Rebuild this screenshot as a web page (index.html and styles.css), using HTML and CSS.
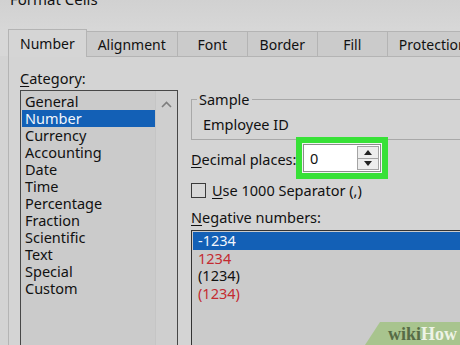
FILE: index.html
```html
<!DOCTYPE html>
<html lang="en">
<head>
    <meta charset="UTF-8" />
    <meta name="viewport" content="width=device-width, initial-scale=1.0">
    <title>Format Cells</title>
    <link rel="stylesheet" href="styles.css">
</head>
<body>
    <div class="dialog">
        <div class="titlebar">
            <span class="title">Format Cells</span>
        </div>

        <div class="tabs">
            <div class="tab tab-active">Number</div>
            <div class="tab">Alignment</div>
            <div class="tab">Font</div>
            <div class="tab">Border</div>
            <div class="tab">Fill</div>
            <div class="tab">Protection</div>
        </div>

        <div class="panel">
            <!-- Columna izquierda: categorias -->
            <div class="col-left">
                <div class="label"><u>C</u>ategory:</div>
                <div class="listbox cat-list">
                    <ul class="cat-items">
                        <li class="item">General</li>
                        <li class="item item-selected">Number</li>
                        <li class="item">Currency</li>
                        <li class="item">Accounting</li>
                        <li class="item">Date</li>
                        <li class="item">Time</li>
                        <li class="item">Percentage</li>
                        <li class="item">Fraction</li>
                        <li class="item">Scientific</li>
                        <li class="item">Text</li>
                        <li class="item">Special</li>
                        <li class="item">Custom</li>
                    </ul>
                    <div class="scrollbar">
                        <svg class="scroll-arrow" width="11" height="7" viewBox="0 0 11 7">
                            <path d="M1 6 L5.5 1.5 L10 6" fill="none" stroke="#7e7e7e" stroke-width="1.6"/>
                        </svg>
                    </div>
                </div>
            </div>

            <!-- Columna derecha: opciones -->
            <div class="col-right">
                <fieldset class="sample">
                    <legend>Sample</legend>
                    <div class="sample-text">Employee ID</div>
                </fieldset>

                <div class="decimals">
                    <div class="decimals-label"><u>D</u>ecimal places:</div>
                    <div class="spin">
                        <div class="spin-value">0</div>
                        <div class="spin-buttons">
                            <div class="spin-btn spin-up">
                                <svg width="8" height="5" viewBox="0 0 8 5"><path d="M0 5 L4 0 L8 5 Z" fill="#222"/></svg>
                            </div>
                            <div class="spin-btn">
                                <svg width="8" height="5" viewBox="0 0 8 5"><path d="M0 0 L8 0 L4 5 Z" fill="#222"/></svg>
                            </div>
                        </div>
                    </div>
                </div>

                <div class="check">
                    <span class="check-box"></span>
                    <span><u>U</u>se 1000 Separator (,)</span>
                </div>

                <div class="label neg-label"><u>N</u>egative numbers:</div>
                <div class="listbox neg-list">
                    <div class="neg-item item-selected">-1234</div>
                    <div class="neg-item neg-red">1234</div>
                    <div class="neg-item">(1234)</div>
                    <div class="neg-item neg-red">(1234)</div>
                </div>
            </div>
        </div>
    </div>

    <div class="watermark"><span class="wm-wiki">wiki</span><span class="wm-how">How</span></div>
</body>
</html>
```

FILE: styles.css
```css
body {
    margin: 0;
    width: 460px;
    height: 345px;
    overflow: hidden;
    position: relative;
    background-color: #d3d3d3;
    font-family: "Noto Sans", "Open Sans", sans-serif;
    font-size: 14.5px;
    line-height: 17px;
    color: #111;
}

u {
    text-underline-offset: 2px;
    text-decoration-thickness: 1px;
}

.dialog {
    width: 540px;
}

.titlebar {
    height: 29px;
    padding-left: 10px;
    overflow: hidden;
    background: linear-gradient(#d1d1d1, #d7d7d7);
}

.title {
    display: block;
    margin-top: -9px;
    font-size: 15px;
}

.tabs {
    display: flex;
    align-items: flex-end;
    padding-left: 9px;
    background-color: #d7d7d7;
}

.tab {
    box-sizing: border-box;
    height: 25px;
    min-width: 71px;
    padding: 0 11px;
    margin-left: -1px;
    display: flex;
    align-items: center;
    justify-content: center;
    border: 1px solid #b4b4b4;
    border-bottom: none;
    background-color: #cbcbcb;
    font-size: 14px;
    white-space: nowrap;
}

.tab-active {
    position: relative;
    height: 28px;
    margin-bottom: -1px;
    background-color: #d5d5d5;
}

.panel {
    display: grid;
    grid-template-columns: 158px 1fr;
    column-gap: 13px;
    margin-left: 8px;
    padding: 13px 0 0 11px;
    height: 400px;
    border-top: 1px solid #b4b4b4;
    border-left: 1px solid #b4b4b4;
    background-color: #d4d4d4;
}

.label {
    white-space: nowrap;
}

.listbox {
    border: 1px solid #474747;
    background-color: #cbcbcb;
}

.cat-list {
    display: flex;
    margin-top: 3px;
    height: 270px;
}

.cat-items {
    list-style: none;
    margin: 0;
    padding: 2px 0 0 1px;
    width: 133px;
}

.item {
    height: 17px;
    padding-left: 3px;
    white-space: nowrap;
}

.item-selected {
    background-color: #1360b6;
    color: #f2f6fc;
}

.scrollbar {
    width: 22px;
    display: flex;
    flex-direction: column;
    align-items: center;
    padding-top: 10px;
    background-color: #cfcfcf;
    box-shadow: inset 1px 0 #c5c5c5;
}

.scroll-arrow {
    display: block;
    flex-shrink: 0;
}

.sample {
    margin: 21px 0 0 0;
    padding: 0 0 6px 5px;
    min-width: 0;
    border: 1px solid #a8a8a8;
}

.sample legend {
    padding: 0 2px;
}

.sample-text {
    padding: 8px 0 0 6px;
}

.decimals {
    display: flex;
    align-items: flex-start;
    margin-top: 4px;
}

.decimals-label {
    width: 112px;
    margin-top: 7px;
    white-space: nowrap;
}

.spin {
    box-sizing: border-box;
    display: flex;
    width: 78px;
    height: 28px;
    border: 1px solid #8c8c8c;
    background-color: #fff;
    box-shadow: 0 0 0 1px #f4f4f4;
    outline: 6px solid #37e137;
    outline-offset: 1px;
}

.spin-value {
    flex: 1;
    padding-left: 6px;
    line-height: 26px;
}

.spin-buttons {
    width: 20px;
    margin: 1px 1px 1px 0;
    display: flex;
    flex-direction: column;
    border: 1px solid #a4a4a4;
    background-color: #ededed;
}

.spin-btn {
    flex: 1;
    display: flex;
    align-items: center;
    justify-content: center;
}

.spin-up {
    border-bottom: 1px solid #a4a4a4;
}

.check {
    display: flex;
    align-items: center;
    gap: 6px;
    margin-top: 10px;
    white-space: nowrap;
}

.check-box {
    box-sizing: border-box;
    width: 15px;
    height: 15px;
    border: 1px solid #3a3a3a;
    background-color: #d8d8d8;
}

.neg-label {
    margin-top: 10px;
}

.neg-list {
    margin-top: 4px;
    padding: 1px 0 0 1px;
    height: 130px;
    border-color: #333;
}

.neg-item {
    height: 17.5px;
    line-height: 17.5px;
    padding-left: 5px;
}

.neg-red {
    color: #c42b31;
}

.watermark {
    position: absolute;
    right: 0;
    bottom: 0;
    box-sizing: border-box;
    width: 95px;
    height: 23px;
    padding: 0 3px 2px 0;
    display: flex;
    align-items: flex-end;
    justify-content: flex-end;
    background-color: #a8c48e;
    clip-path: polygon(15px 0, 100% 0, 100% 100%, 0 100%);
    font-family: "Liberation Serif", "DejaVu Serif", serif;
    font-weight: bold;
    font-size: 18px;
    line-height: 18px;
}

.wm-wiki {
    color: #566b46;
}

.wm-how {
    color: #eef3e6;
}
```
